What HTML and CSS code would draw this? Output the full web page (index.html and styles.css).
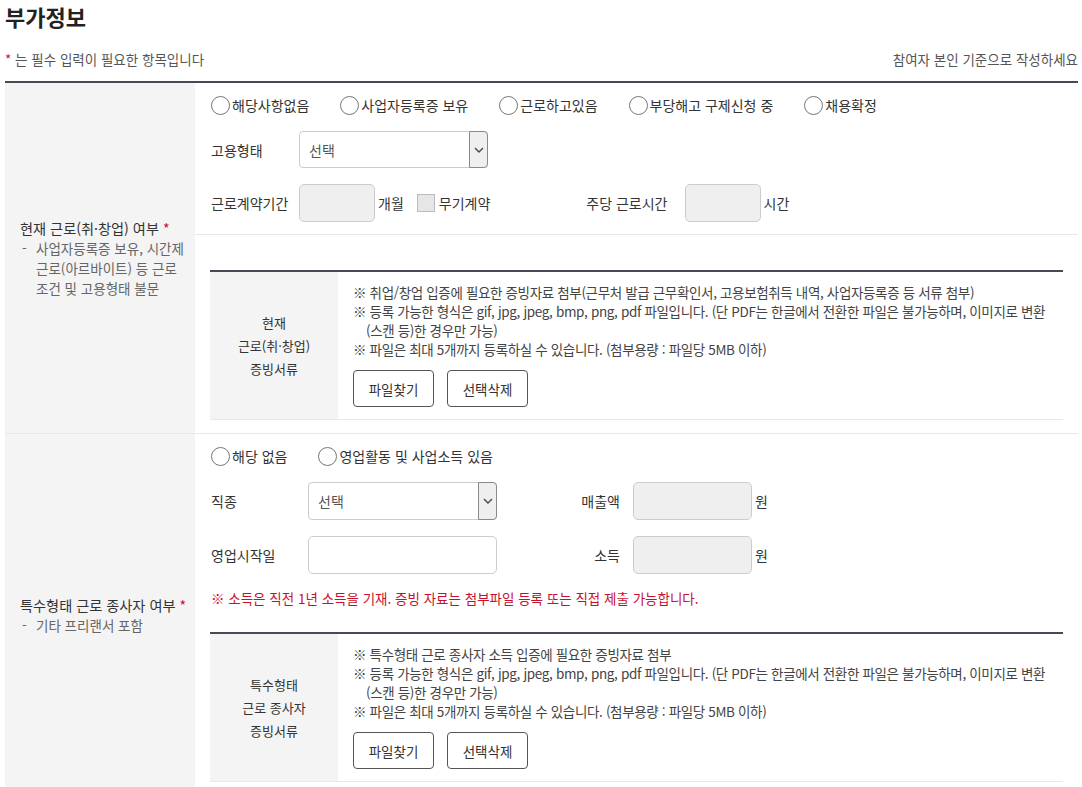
FILE: index.html
```html
<!doctype html>
<html lang="ko">

<head>
  <meta charset="utf-8">
  <title>부가정보</title>
  <meta name="viewport" content="width=device-width, initial-scale=1">
  <link rel="stylesheet" href="styles.css">
</head>

<body>
  <div class="wrap">
    <h2 class="tit">부가정보</h2>
    <div class="guide">
      <p><span class="req">*</span> 는 필수 입력이 필요한 항목입니다</p>
      <p>참여자 본인 기준으로 작성하세요</p>
    </div>

    <div class="tbl">
      <!-- 현재 근로 여부 -->
      <div class="tr">
        <div class="th">
          <p class="th-tit">현재 근로(취·창업) 여부 <span class="req">*</span></p>
          <p class="th-desc"><span class="dash">-</span><span>사업자등록증 보유, 시간제 근로(아르바이트) 등 근로 조건 및 고용형태 불문</span></p>
        </div>
        <div class="td">
          <div class="fields sep">
            <div class="radios">
              <label class="rd"><input type="radio" name="work"> 해당사항없음</label>
              <label class="rd"><input type="radio" name="work"> 사업자등록증 보유</label>
              <label class="rd"><input type="radio" name="work"> 근로하고있음</label>
              <label class="rd"><input type="radio" name="work"> 부당해고 구제신청 중</label>
              <label class="rd"><input type="radio" name="work"> 채용확정</label>
            </div>
            <div class="line">
              <span class="lbl">고용형태</span>
              <div class="sel sel-37">
                <select><option>선택</option></select>
                <span class="sel-btn"><svg width="10" height="6" viewBox="0 0 10 6"><path d="M1 1l4 4 4-4" fill="none" stroke="#444" stroke-width="1.3"/></svg></span>
              </div>
            </div>
            <div class="line">
              <span class="lbl">근로계약기간</span>
              <input class="ipt ipt-s" type="text" disabled>
              <span class="unit">개월</span>
              <label class="chk"><input type="checkbox" disabled> 무기계약</label>
              <span class="lbl-week">주당 근로시간</span>
              <input class="ipt ipt-s" type="text" disabled>
              <span class="unit">시간</span>
            </div>
          </div>
          <div class="file-box">
            <div class="ftbl">
              <div class="fth">현재<br>근로(취·창업)<br>증빙서류</div>
              <div class="ftd">
                <ul class="notes">
                  <li>※ 취업/창업 입증에 필요한 증빙자료 첨부(근무처 발급 근무확인서, 고용보험취득 내역, 사업자등록증 등 서류 첨부)</li>
                  <li>※ 등록 가능한 형식은 gif, jpg, jpeg, bmp, png, pdf 파일입니다. (단 PDF는 한글에서 전환한 파일은 불가능하며, 이미지로 변환<br>(스캔 등)한 경우만 가능)</li>
                  <li>※ 파일은 최대 5개까지 등록하실 수 있습니다. (첨부용량 : 파일당 5MB 이하)</li>
                </ul>
                <div class="btns">
                  <button type="button">파일찾기</button>
                  <button type="button">선택삭제</button>
                </div>
              </div>
            </div>
          </div>
        </div>
      </div>

      <!-- 특수형태 근로 종사자 여부 -->
      <div class="tr">
        <div class="th">
          <p class="th-tit">특수형태 근로 종사자 여부 <span class="req">*</span></p>
          <p class="th-desc"><span class="dash">-</span><span>기타 프리랜서 포함</span></p>
        </div>
        <div class="td">
          <div class="fields fields-open">
            <div class="radios">
              <label class="rd"><input type="radio" name="special"> 해당 없음</label>
              <label class="rd"><input type="radio" name="special"> 영업활동 및 사업소득 있음</label>
            </div>
            <div class="line">
              <span class="lbl lbl-w">직종</span>
              <div class="sel">
                <select><option>선택</option></select>
                <span class="sel-btn"><svg width="10" height="6" viewBox="0 0 10 6"><path d="M1 1l4 4 4-4" fill="none" stroke="#444" stroke-width="1.3"/></svg></span>
              </div>
              <span class="lbl-r">매출액</span>
              <input class="ipt ipt-m" type="text" disabled>
              <span class="unit">원</span>
            </div>
            <div class="line">
              <span class="lbl lbl-w">영업시작일</span>
              <input class="ipt ipt-l" type="text">
              <span class="lbl-r">소득</span>
              <input class="ipt ipt-m" type="text" disabled>
              <span class="unit">원</span>
            </div>
            <p class="warn">※ 소득은 직전 1년 소득을 기재. 증빙 자료는 첨부파일 등록 또는 직접 제출 가능합니다.</p>
          </div>
          <div class="file-box file-box-2">
            <div class="ftbl">
              <div class="fth">특수형태<br>근로 종사자<br>증빙서류</div>
              <div class="ftd">
                <ul class="notes">
                  <li>※ 특수형태 근로 종사자 소득 입증에 필요한 증빙자료 첨부</li>
                  <li>※ 등록 가능한 형식은 gif, jpg, jpeg, bmp, png, pdf 파일입니다. (단 PDF는 한글에서 전환한 파일은 불가능하며, 이미지로 변환<br>(스캔 등)한 경우만 가능)</li>
                  <li>※ 파일은 최대 5개까지 등록하실 수 있습니다. (첨부용량 : 파일당 5MB 이하)</li>
                </ul>
                <div class="btns">
                  <button type="button">파일찾기</button>
                  <button type="button">선택삭제</button>
                </div>
              </div>
            </div>
          </div>
        </div>
      </div>
    </div>
  </div>
</body>
</html>
```

FILE: styles.css
```css
* {
  box-sizing: border-box;
}
body {
  margin: 0;
  font-family: "Noto Sans CJK KR", "Noto Sans", sans-serif;
  font-size: 14px;
  color: #333;
}
p, ul {
  margin: 0;
  padding: 0;
}
ul {
  list-style: none;
}
.wrap {
  padding: 0 4px 0 5px;
}
.tit {
  margin: 0;
  font-size: 22px;
  line-height: 32px;
  font-weight: 700;
  color: #222;
}
.guide {
  display: flex;
  justify-content: space-between;
  margin: 18px 0 13px;
  font-size: 13.5px;
  line-height: 18px;
  color: #555;
}
.req {
  color: #c8102e;
}

/* table */
.tbl {
  border-top: 2px solid #464a55;
}
.tr {
  display: flex;
  border-bottom: 1px solid #e8e8e8;
}
.th {
  width: 190px;
  flex: none;
  background: #f4f4f4;
  padding: 0 8px 0 15px;
  display: flex;
  flex-direction: column;
  justify-content: center;
}
.th-tit {
  font-size: 14.2px;
  line-height: 20px;
  white-space: nowrap;
}
.th-desc {
  display: flex;
  font-size: 13.5px;
  line-height: 20px;
  color: #666;
}
.dash {
  width: 16px;
  flex: none;
  padding-left: 2px;
}
.td {
  flex: 1;
}
.fields {
  padding: 12px 15px 12px 16px;
  display: flex;
  flex-direction: column;
  gap: 16px;
}
.fields.sep {
  border-bottom: 1px solid #e8e8e8;
}
.fields-open {
  padding-bottom: 0;
}
.radios {
  display: flex;
  gap: 31px;
  height: 20px;
  align-items: center;
}
.rd {
  display: flex;
  align-items: center;
  gap: 2px;
}
.rd input {
  appearance: none;
  margin: 0;
  width: 19px;
  height: 19px;
  border: 1px solid #767676;
  border-radius: 50%;
  background: #fff;
}
.line {
  display: flex;
  align-items: center;
}
.lbl {
  width: 88px;
  flex: none;
}
.lbl-w {
  width: 97px;
}
.lbl-r {
  width: 136px;
  padding-right: 13px;
  text-align: right;
}
.lbl-week {
  margin: 0 17px 0 96px;
}
.unit {
  margin-left: 3px;
}

/* select */
.sel {
  width: 189px;
  height: 38px;
  display: flex;
  border: 1px solid #ccc;
  border-radius: 4px;
  background: #fff;
}
.sel-37 {
  height: 37px;
}
.sel select {
  appearance: none;
  flex: 1;
  border: 0;
  background: transparent;
  font: inherit;
  color: #555;
  padding-left: 9px;
  outline: none;
}
.sel-btn {
  width: 19px;
  flex: none;
  margin: -1px -1px -1px 0;
  background: #efefef;
  border: 1px solid #8a8a8a;
  border-radius: 0 4px 4px 0;
  display: flex;
  align-items: center;
  justify-content: center;
}

/* inputs */
.ipt {
  height: 38px;
  border: 1px solid #ccc;
  border-radius: 5px;
  background: #fff;
  font: inherit;
  padding: 0 8px;
}
.ipt:disabled {
  background: #efefef;
}
.ipt-s {
  width: 76px;
}
.ipt-m {
  width: 119px;
}
.ipt-l {
  width: 189px;
}
.chk {
  display: flex;
  align-items: center;
  gap: 4px;
  margin-left: 13px;
}
.chk input {
  appearance: none;
  margin: 0;
  width: 18px;
  height: 18px;
  border: 1px solid #bbb;
  background: #e6e6e6;
}
.warn {
  font-size: 13.5px;
  color: #c8102e;
  line-height: 20px;
  margin-top: -2px;
}

/* file attach */
.file-box {
  padding: 35px 15px 13px;
}
.file-box-2 {
  padding-top: 24px;
}
.ftbl {
  display: flex;
  border-top: 2px solid #464a55;
  border-bottom: 1px solid #e8e8e8;
}
.fth {
  width: 128px;
  flex: none;
  background: #f4f4f4;
  display: flex;
  align-items: center;
  justify-content: center;
  text-align: center;
  font-size: 13px;
  line-height: 23px;
}
.ftd {
  flex: 1;
  padding: 11px 15px 12px;
}
.notes li {
  font-size: 13.5px;
  line-height: 19px;
  letter-spacing: -0.35px;
  color: #444;
  padding-left: 13px;
  text-indent: -13px;
  white-space: nowrap;
}
.btns {
  display: flex;
  gap: 13px;
  margin-top: 11px;
}
.btns button {
  width: 81px;
  height: 37px;
  border: 1px solid #555;
  border-radius: 4px;
  background: #fff;
  font: inherit;
  font-size: 13.5px;
  color: #333;
}
```
